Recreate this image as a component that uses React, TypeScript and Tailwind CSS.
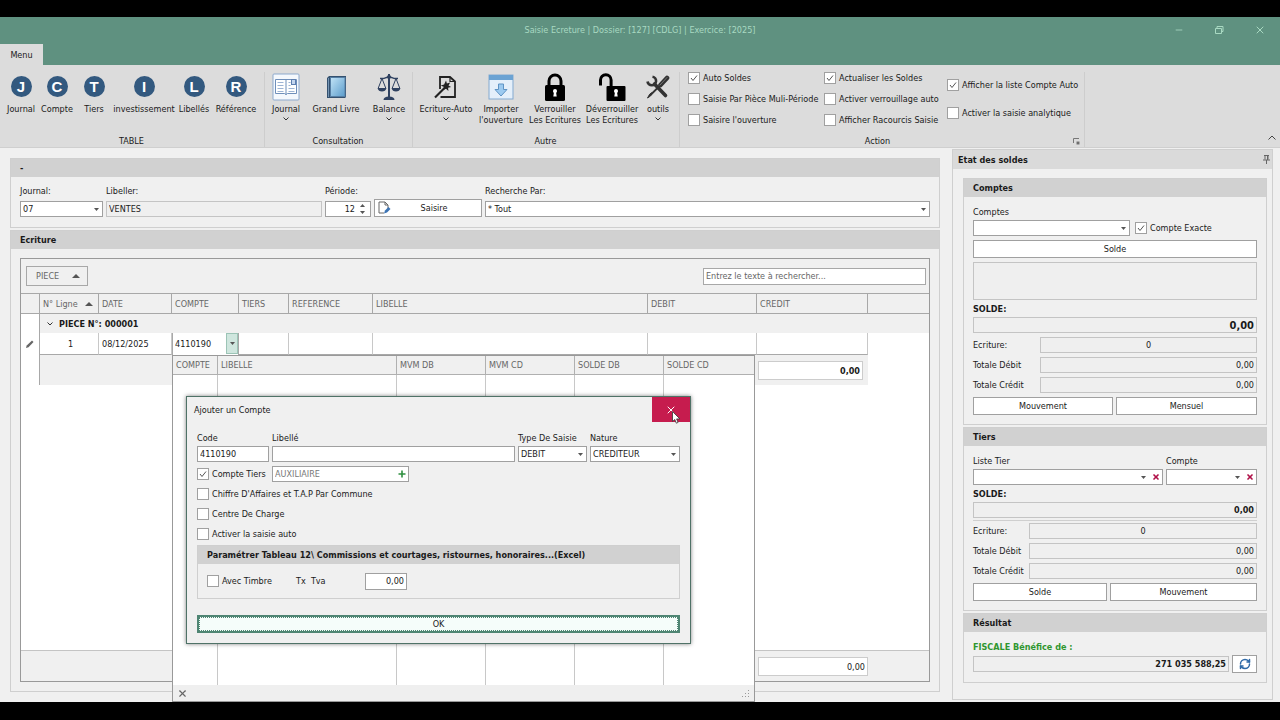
import React, { useState } from "react";
import { Minus, RefreshCw, X } from "lucide-react";


type RibbonItem = {
    label: string;
    icon: React.ReactNode;
    width: string;
    menu?: boolean;
};

/* ---------- icons ---------- */

const Letter = ({ children }: { children: string }) => (
    <span className="flex h-[21px] w-[21px] items-center justify-center rounded-full bg-[#33597f] font-['Liberation_Sans'] text-[15px] leading-none font-bold text-white">
        {children}
    </span>
);

const JournalIcon = () => (
    <svg width="28" height="28" viewBox="0 0 28 28" fill="none">
        <rect x="1" y="1" width="26" height="26" rx="1" fill="#f4f8fd" stroke="#8da9cd" />
        <path d="M3.500 6.500h21v14h-9l-1.500 1-1.500-1h-9z" fill="#fff" stroke="#6f8fba" />
        <path d="M14 7v15" stroke="#6f8fba" />
        <path d="M5.500 9.500h6M5.500 12.500h6M5.500 15.500h6M5.500 18.500h6M16.500 15.500h6M16.500 18.500h6M16.500 9.500h2M16.500 12.500h2" stroke="#9db4d4" />
        <rect x="19.500" y="6.500" width="4" height="5" fill="#c4d6ee" stroke="#5d7fb0" />
    </svg>
);

const BookIcon = () => (
    <svg width="24" height="26" viewBox="0 0 24 26">
        <defs>
            <linearGradient id="book" x1="0" y1="0" x2="1" y2="1">
                <stop offset="0%" stopColor="#c2e4f7" />
                <stop offset="100%" stopColor="#5b9ccb" />
            </linearGradient>
        </defs>
        <path d="M3 4 5 2h17v21l-1 1H3z" fill="#34516f" />
        <rect x="6.500" y="3.500" width="14.500" height="19" fill="url(#book)" stroke="#567fa4" />
        <path d="M4.500 4v19" stroke="#7494b3" />
    </svg>
);

const BalanceIcon = () => (
    <svg width="24" height="28" viewBox="0 0 24 28" fill="none" stroke="#2f4160">
        <path d="M12 1v23" strokeWidth="2" />
        <path d="M3 5.500h3c2 0 3-1.500 6-1.500s4 1.500 6 1.500h3" strokeWidth="1.400" />
        <circle cx="12" cy="4" r="2" fill="#2f4160" stroke="none" />
        <path d="m5 5.500-3.700 9.500M5 5.500 8.700 15M19 5.500 15.300 15M19 5.500l3.700 9.500" strokeWidth="1" />
        <path d="M.5 15h9c-.5 2.500-2.300 3.500-4.500 3.500S1 17.500.5 15zM14.500 15h9c-.5 2.500-2.300 3.500-4.500 3.500s-4-1-4.500-3.500z" fill="#2f4160" stroke="none" />
        <path d="M6.500 27c0-2 2-3.500 5.500-3.500s5.500 1.500 5.500 3.500z" fill="#2f4160" stroke="none" />
    </svg>
);

const WandPageIcon = () => (
    <svg width="24" height="24" viewBox="0 0 24 24" fill="none" stroke="#222" strokeWidth="1.800">
        <path d="M6 14V2h10l5 4.500V22H6.500" />
        <path d="M16 2v4.500h5" strokeWidth="1.200" />
        <path d="m1 22.500 10-10" strokeWidth="2.200" />
        <path d="m12 5.500.9 3 3.300-.9-1.700 2.900 2.600 1.500-3 .8.3 3.300-2.400-2.400-2.900 1.400.9-3.200-3.200-1.500 3.300-.9z" fill="#222" stroke="none" />
    </svg>
);

const ImportIcon = () => (
    <svg width="26" height="26" viewBox="0 0 26 26">
        <rect x="1" y="1" width="24" height="24" fill="#e4effa" stroke="#83a9d0" />
        <rect x="1" y="1" width="24" height="5" fill="#6ba3d3" />
        <path d="M10.500 10h5v5.500h3.500L13 22l-6-6.500h3.500z" fill="#9ccaf0" stroke="#5f93c4" />
    </svg>
);

const LockIcon = () => (
    <svg width="22" height="28" viewBox="0 0 22 28">
        <path d="M5 13V8a6 6 0 0 1 12 0v5" fill="none" stroke="#000" strokeWidth="3" />
        <rect x="1" y="12" width="20" height="16" rx="1.500" />
        <path d="M9 18a2 2 0 0 1 4 0c0 1-.8 1.500-.8 2.200l.5 3.300H9.300l.5-3.300c0-.7-.8-1.200-.8-2.200z" fill="#fff" />
    </svg>
);

const UnlockIcon = () => (
    <svg width="28" height="28" viewBox="0 0 28 28">
        <path d="M2.500 12.500V7a5.300 5.300 0 0 1 10.600 0v7" fill="none" stroke="#000" strokeWidth="3" />
        <rect x="8.500" y="13" width="19" height="15" rx="1" />
        <path d="M16 18a2 2 0 0 1 4 0c0 1-.8 1.500-.8 2.200l.5 3.300h-3.400l.5-3.300c0-.7-.8-1.200-.8-2.200z" fill="#fff" />
    </svg>
);

const ToolsIcon = () => (
    <svg width="24" height="24" viewBox="0 0 24 24" fill="none" stroke="#333" strokeLinecap="round">
        <path d="m8.500 9 11 11.500" strokeWidth="3.600" />
        <path d="M6.500 1.700a4.300 4.300 0 1 1-5 4.800" strokeWidth="2.600" strokeLinecap="butt" />
        <path d="M21 3 14.500 10" strokeWidth="4.600" />
        <path d="m13 11.500-8.500 8.500" strokeWidth="1.800" />
        <path d="m5.500 18-1 3-3 2 2-3.500z" fill="#333" strokeWidth="1" />
        <path d="m21 2.500-7 7.500" stroke="#888" strokeWidth=".8" />
    </svg>
);

const EditPageIcon = () => (
    <svg width="14" height="14" viewBox="0 0 14 14" fill="none">
        <path d="M2 1h6l3 3v4M2 1v11h5" stroke="#666" />
        <path d="M8 1v3h3" stroke="#666" />
        <path d="m7 12.500 1-3L11.500 6l2 2-3.500 3.500z" fill="#3c74b4" />
    </svg>
);

const Arrow = ({ className = "" }: { className?: string }) => (
    <svg className={className} width="5" height="3" viewBox="0 0 5 3">
        <path d="M0 0h5L2.500 3z" fill="#555" />
    </svg>
);

const SortUp = () => (
    <svg width="8" height="4" viewBox="0 0 8 4">
        <path d="M0 4h8L4 0z" fill="#555" />
    </svg>
);

const Chevron = ({ className = "" }: { className?: string }) => (
    <svg className={className} width="6" height="4" viewBox="0 0 6 4" fill="none">
        <path d="M.5.5 3 3 5.500.5" stroke="#333" />
    </svg>
);

const PinIcon = () => (
    <svg width="7" height="9" viewBox="0 0 7 9" fill="none" stroke="#666">
        <path d="M1 .5h5M2 .5v4M5 .5v4M4.500 1v4M0 5h7M3.500 5v4" />
    </svg>
);

const Cursor = () => (
    <svg className="absolute top-[14px] left-[20px]" width="9" height="13" viewBox="0 0 9 13">
        <path d="M.5.5v10l2.300-2 1.500 3.700 1.800-.8-1.500-3.500h3.300z" fill="#fff" stroke="#333" strokeWidth=".8" />
    </svg>
);

/* ---------- form controls ---------- */

const Check = ({ label, checked = false }: { label: string; checked?: boolean }) => {
    const [on, setOn] = useState(checked);
    return (
        <label className="flex items-center gap-[3px] whitespace-nowrap">
            <span className="relative h-3 w-3 shrink-0">
                <input
                    type="checkbox"
                    checked={on}
                    onChange={(e) => setOn(e.target.checked)}
                    className="peer block h-3 w-3 appearance-none border border-[#a0a0a0] bg-white"
                />
                <svg className="pointer-events-none absolute inset-0 hidden peer-checked:block" width="12" height="12" viewBox="0 0 12 12" fill="none">
                    <path d="m3 6 2 2.500L9 3.500" stroke="#555" />
                </svg>
            </span>
            {label}
        </label>
    );
};

type ComboProps = { id: string; value: string; className?: string; clearable?: boolean };

const Combo = ({ id, value, className = "", clearable }: ComboProps) => (
    <div className={`relative h-4 ${className}`}>
        <select id={id} className="block h-4 w-full appearance-none border border-[#a0a0a0] bg-white px-0.5">
            <option>{value}</option>
        </select>
        <Arrow className={clearable ? "pointer-events-none absolute top-[7px] right-[17px]" : "pointer-events-none absolute top-[7px] right-1"} />
        {clearable && (
            <button type="button" aria-label="Effacer" className="absolute top-[4px] right-[3px] text-[#b01048]">
                <X size={8} strokeWidth={5} />
            </button>
        )}
    </div>
);

const PushButton = ({ children, className = "" }: { children: React.ReactNode; className?: string }) => (
    <button type="button" className={`h-[18px] border border-[#a0a0a0] bg-white hover:bg-[#eaf5f1] ${className}`}>
        {children}
    </button>
);

const readOnlyField = "h-4 w-full min-w-0 border border-[#c4c4c4] bg-[#efefef] px-0.5";

const Panel = ({ title, children, className = "" }: { title: string; children: React.ReactNode; className?: string }) => (
    <section className={`flex flex-col border border-[#cfcfcf] ${className}`}>
        <h2 className="h-[18px] shrink-0 bg-[#d1d1d1] pl-[9px] leading-[18px] font-bold">{title}</h2>
        {children}
    </section>
);

/* ---------- ribbon ---------- */

const tableItems: RibbonItem[] = [
    { label: "Journal", icon: <Letter>J</Letter>, width: "w-9" },
    { label: "Compte", icon: <Letter>C</Letter>, width: "w-9" },
    { label: "Tiers", icon: <Letter>T</Letter>, width: "w-[38px]" },
    { label: "investissement", icon: <Letter>I</Letter>, width: "w-[62px]" },
    { label: "Libellés", icon: <Letter>L</Letter>, width: "w-[38px]" },
    { label: "Référence", icon: <Letter>R</Letter>, width: "w-[46px]" },
];

const consultationItems: RibbonItem[] = [
    { label: "Journal", icon: <JournalIcon />, width: "w-9", menu: true },
    { label: "Grand Livre", icon: <BookIcon />, width: "w-[64px]" },
    { label: "Balance", icon: <BalanceIcon />, width: "w-[42px]", menu: true },
];

const autreItems: RibbonItem[] = [
    { label: "Ecriture-Auto", icon: <WandPageIcon />, width: "w-[60px]", menu: true },
    { label: "Importer\nl'ouverture", icon: <ImportIcon />, width: "w-[50px]" },
    { label: "Verrouiller\nLes Ecritures", icon: <LockIcon />, width: "w-[58px]" },
    { label: "Déverrouiller\nLes Ecritures", icon: <UnlockIcon />, width: "w-[56px]" },
    { label: "outils", icon: <ToolsIcon />, width: "w-9", menu: true },
];

const RibbonGroup = ({ title, items, className }: { title: string; items: RibbonItem[]; className: string }) => (
    <div className={`flex flex-col justify-between border-r border-[#cdcdcd] pl-[3px] ${className}`}>
        <div className="flex">
            {items.map((item) => (
                <button key={item.label} type="button" className={`flex flex-col items-center ${item.width}`}>
                    <span className="flex h-[29px] items-center justify-center">{item.icon}</span>
                    <span className="pt-[3px] leading-[11px] whitespace-pre">{item.label}</span>
                    {item.menu && <Chevron className="mt-[2px]" />}
                </button>
            ))}
        </div>
        <div className="pr-1 text-center leading-3">{title}</div>
    </div>
);

const Ribbon = () => (
    <div className="flex h-[83px] border-b border-[#cfcfcf] bg-[#dcdcdc] pt-[7px]">
        <RibbonGroup title="TABLE" items={tableItems} className="w-[265px]" />
        <RibbonGroup title="Consultation" items={consultationItems} className="w-[148px]" />
        <RibbonGroup title="Autre" items={autreItems} className="w-[267px]" />
        <div className="flex w-[405px] flex-col justify-between border-r border-[#cdcdcd] pr-1 pl-2">
            <div className="flex">
                <div className="flex w-[136px] flex-col gap-[9px]">
                    <Check label="Auto Soldes" checked />
                    <Check label="Saisie Par Pièce Muli-Période" />
                    <Check label="Saisire l'ouverture" />
                </div>
                <div className="flex w-[123px] flex-col gap-[9px]">
                    <Check label="Actualiser les Soldes" checked />
                    <Check label="Activer verrouillage auto" />
                    <Check label="Afficher Racourcis Saisie" />
                </div>
                <div className="flex flex-col gap-4 pt-[7px]">
                    <Check label="Afficher la liste Compte Auto" checked />
                    <Check label="Activer la saisie analytique" />
                </div>
            </div>
            <div className="flex items-center leading-3">
                <span className="flex-1 pr-[6px] text-center">Action</span>
                <button type="button" aria-label="Options">
                    <svg width="7" height="7" viewBox="0 0 7 7" fill="none" stroke="#777">
                        <path d="M.5 5V.5H6" />
                        <rect x="4" y="4" width="2" height="2" fill="#555" />
                    </svg>
                </button>
            </div>
        </div>
        <div className="flex flex-1 items-end justify-end pr-1 pb-[7px]">
            <button type="button" aria-label="Réduire le ruban">
                <svg width="8" height="5" viewBox="0 0 8 5" fill="none">
                    <path d="M.5 4.500 4 1l3.500 3.500" stroke="#444" />
                </svg>
            </button>
        </div>
    </div>
);

/* ---------- left side ---------- */

const JournalForm = () => (
    <Panel title="-">
        <div className="grid grid-cols-[83px_216px_46px_108px_1fr] items-end gap-x-[3px] px-[9px] pt-2 pb-[10px]">
            <label htmlFor="journal" className="h-[14px]">Journal:</label>
            <label htmlFor="libeller" className="h-[14px]">Libeller:</label>
            <label htmlFor="periode" className="h-[14px]">Période:</label>
            <span />
            <label htmlFor="recherche" className="h-[14px]">Recherche Par:</label>

            <Combo id="journal" value="07" />
            <input id="libeller" readOnly defaultValue="VENTES" className={readOnlyField} />
            <div className="flex h-4 border border-[#a0a0a0] bg-white">
                <input id="periode" defaultValue="12" className="w-full min-w-0 bg-transparent text-right" />
                <span className="flex w-[15px] shrink-0 flex-col items-center justify-center gap-1">
                    <button type="button" aria-label="Plus"><Arrow className="block rotate-180" /></button>
                    <button type="button" aria-label="Moins"><Arrow className="block" /></button>
                </span>
            </div>
            <PushButton className="flex items-center pl-[2px]">
                <EditPageIcon />
                <span className="flex-1 pr-1 text-center">Saisire</span>
            </PushButton>
            <Combo id="recherche" value="* Tout" />
        </div>
    </Panel>
);

const lookupColumns = ["COMPTE", "LIBELLE", "MVM DB", "MVM CD", "SOLDE DB", "SOLDE CD"];

// account list that drops below the COMPTE cell
const AccountLookup = () => (
    <div className="absolute top-full -left-px z-10 flex h-[347px] w-[583px] flex-col border border-[#999] bg-white text-[#666]">
        <table className="h-full w-full table-fixed border-separate border-spacing-0">
            <colgroup>
                <col className="w-[45px]" />
                <col className="w-[179px]" />
                <col className="w-[89px]" />
                <col className="w-[89px]" />
                <col className="w-[89px]" />
                <col />
            </colgroup>
            <thead>
                <tr>
                    {lookupColumns.map((c) => (
                        <th key={c} className="h-[19px] border-r border-b border-[#b0b0b0] bg-[#f0f0f0] pl-[3px] text-left font-normal whitespace-nowrap last:border-r-0">{c}</th>
                    ))}
                </tr>
            </thead>
            <tbody>
                <tr>
                    {lookupColumns.map((c) => (
                        <td key={c} className="border-r border-[#c8c8c8] last:border-r-0" />
                    ))}
                </tr>
            </tbody>
        </table>
        <div className="flex h-4 shrink-0 items-center justify-between bg-[#efefef] px-1">
            <button type="button" aria-label="Fermer la liste"><X size={11} strokeWidth={2.5} /></button>
            <svg width="9" height="9" viewBox="0 0 9 9" fill="#999">
                <path d="M7 1h1v1H7zM4 4h1v1H4zM7 4h1v1H7zM1 7h1v1H1zM4 7h1v1H4zM7 7h1v1H7z" />
            </svg>
        </div>
    </div>
);

const headCell = "h-5 border-r border-b border-[#a8a8a8] pl-[3px] text-left font-normal whitespace-nowrap";
const bodyCell = "h-[22px] border-r border-b border-r-[#c8c8c8] border-b-[#a8a8a8] bg-white pl-[3px]";

const EntriesTable = () => (
    <table className="w-full table-fixed border-separate border-spacing-0">
        <colgroup>
            <col className="w-[19px]" />
            <col className="w-[59px]" />
            <col className="w-[73px]" />
            <col className="w-[67px]" />
            <col className="w-[50px]" />
            <col className="w-[84px]" />
            <col className="w-[275px]" />
            <col className="w-[109px]" />
            <col className="w-[111px]" />
            <col />
        </colgroup>
        <thead className="text-[#666]">
            <tr>
                <th className={headCell} />
                <th className={headCell}>
                    <span className="flex items-center justify-between pr-[5px]">N° Ligne <SortUp /></span>
                </th>
                <th className={headCell}>DATE</th>
                <th className={headCell}>COMPTE</th>
                <th className={headCell}>TIERS</th>
                <th className={headCell}>REFERENCE</th>
                <th className={headCell}>LIBELLE</th>
                <th className={headCell}>DEBIT</th>
                <th className={headCell}>CREDIT</th>
                <th className="border-b border-[#a8a8a8]" />
            </tr>
        </thead>
        <tbody>
            <tr>
                <td className="h-[19px] border-r border-[#a8a8a8] bg-white" />
                <td colSpan={9} className="pl-[7px] font-bold">
                    <span className="flex items-center gap-[6px]"><Chevron /> PIECE N°: 000001</span>
                </td>
            </tr>
            <tr>
                <td className="border-r border-[#a8a8a8] bg-white">
                    <svg className="mx-auto" width="8" height="8" viewBox="0 0 8 8">
                        <path d="m0 8 .7-2.500L6 .5 7.500 2 2.500 7.300z" fill="#666" />
                    </svg>
                </td>
                <td className={`${bodyCell} text-center`}>1</td>
                <td className={bodyCell}>08/12/2025</td>
                <td className="relative h-[22px] border-r border-l border-[#a8a8a8] bg-white">
                    <div className="flex h-full items-stretch">
                        <input aria-label="Compte" defaultValue="4110190" className="w-full min-w-0 pl-[2px]" />
                        <button type="button" aria-label="Liste des comptes" className="flex h-[21px] w-3 shrink-0 items-center justify-center border border-[#9cc4b6] bg-[#cfe6de]">
                            <Arrow />
                        </button>
                    </div>
                    <AccountLookup />
                </td>
                <td className={bodyCell} />
                <td className={bodyCell} />
                <td className={bodyCell} />
                <td className={bodyCell} />
                <td className={bodyCell} />
                <td className="bg-white" />
            </tr>
            <tr>
                <td className="h-[30px] border-r border-[#a8a8a8] bg-white" />
                <td colSpan={7} />
                <td className="pr-[5px] pl-px">
                    <div className="h-[19px] border border-[#ccc] bg-white pr-[2px] text-right leading-[18px] font-bold">0,00</div>
                </td>
                <td className="bg-white" />
            </tr>
        </tbody>
    </table>
);

const Entries = () => (
    <Panel title="Ecriture" className="mt-[2px] flex-1">
        <div className="mx-[9px] mt-[9px] mb-[9px] flex flex-1 flex-col border border-[#999]">
            <div className="flex h-[35px] items-center justify-between border-b border-[#a8a8a8] pr-[3px] pl-[5px]">
                <button type="button" className="flex h-5 w-[62px] items-center justify-between border border-[#a8a8a8] pr-[7px] pl-[9px] text-[#666]">
                    PIECE <SortUp />
                </button>
                <input aria-label="Rechercher" placeholder="Entrez le texte à rechercher..." className="h-[17px] w-[223px] border border-[#a8a8a8] bg-white px-0.5 placeholder:text-[#666]" />
            </div>
            <EntriesTable />
            <div className="flex-1 bg-white" />
            <div className="flex h-[31px] items-center border-t border-[#c4c4c4]">
                <div className="ml-[737px] h-[19px] w-[110px] border border-[#ccc] bg-white pr-[2px] text-right leading-[18px]">0,00</div>
            </div>
        </div>
    </Panel>
);

/* ---------- right side ---------- */

type BalanceRowsProps = { prefix: string; cols: string };

const BalanceRows = ({ prefix, cols }: BalanceRowsProps) => (
    <div className={`grid items-center gap-y-1 ${cols}`}>
        <label htmlFor={`${prefix}-ecriture`}>Ecriture:</label>
        <input id={`${prefix}-ecriture`} readOnly defaultValue="0" className={`${readOnlyField} text-center`} />
        <label htmlFor={`${prefix}-debit`}>Totale Débit</label>
        <input id={`${prefix}-debit`} readOnly defaultValue="0,00" className={`${readOnlyField} text-right`} />
        <label htmlFor={`${prefix}-credit`}>Totale Crédit</label>
        <input id={`${prefix}-credit`} readOnly defaultValue="0,00" className={`${readOnlyField} text-right`} />
    </div>
);

const BalancePanel = () => (
    <aside className="mt-px mr-[7px] mb-[2px] flex w-[321px] shrink-0 flex-col border border-[#cfcfcf]">
        <div className="flex h-[19px] items-center justify-between bg-[#dadada] pr-[2px] pl-[5px] font-bold">
            Etat des soldes
            <button type="button" aria-label="Épingler"><PinIcon /></button>
        </div>
        <div className="flex flex-col gap-[2px] pt-[9px] pr-[5px] pl-[10px]">
            <Panel title="Comptes">
                <div className="flex flex-col px-[9px] pt-[9px] pb-[9px]">
                    <label htmlFor="comptes" className="h-[14px]">Comptes</label>
                    <div className="flex items-center gap-[5px]">
                        <Combo id="comptes" value="" className="w-[157px]" />
                        <Check label="Compte Exacte" checked />
                    </div>
                    <PushButton className="mt-1">Solde</PushButton>
                    <textarea readOnly aria-label="Détail" className="mt-1 h-[38px] resize-none border border-[#c4c4c4] bg-[#efefef]" />
                    <label htmlFor="c-solde" className="mt-[3px] h-[14px] font-bold">SOLDE:</label>
                    <input id="c-solde" readOnly defaultValue="0,00" className={`${readOnlyField} mb-1 text-right text-[11px] font-bold`} />
                    <BalanceRows prefix="c" cols="grid-cols-[67px_1fr]" />
                    <div className="mt-1 flex gap-[3px]">
                        <PushButton className="w-[140px]">Mouvement</PushButton>
                        <PushButton className="flex-1">Mensuel</PushButton>
                    </div>
                </div>
            </Panel>
            <Panel title="Tiers">
                <div className="flex flex-col px-[9px] pt-[9px] pb-[9px]">
                    <div className="grid grid-cols-[190px_1fr] gap-x-[3px]">
                        <label htmlFor="liste-tier" className="h-[14px]">Liste Tier</label>
                        <label htmlFor="tier-compte" className="h-[14px]">Compte</label>
                        <Combo id="liste-tier" value="" clearable />
                        <Combo id="tier-compte" value="" clearable />
                    </div>
                    <label htmlFor="t-solde" className="mt-[3px] h-[14px] font-bold">SOLDE:</label>
                    <input id="t-solde" readOnly defaultValue="0,00" className={`${readOnlyField} text-right font-bold`} />
                    <hr className="my-[2px] border-[#cfcfcf]" />
                    <BalanceRows prefix="t" cols="grid-cols-[56px_1fr]" />
                    <div className="mt-1 flex gap-[3px]">
                        <PushButton className="w-[134px]">Solde</PushButton>
                        <PushButton className="flex-1">Mouvement</PushButton>
                    </div>
                </div>
            </Panel>
            <Panel title="Résultat">
                <div className="px-[9px] pt-[9px] pb-[9px]">
                    <label htmlFor="resultat" className="block h-[14px] font-bold text-[#2f962f]">FISCALE Bénéfice de :</label>
                    <div className="flex items-center gap-[3px]">
                        <input id="resultat" readOnly defaultValue="271 035 588,25" className={`${readOnlyField} text-right font-bold`} />
                        <PushButton className="flex w-[25px] shrink-0 items-center justify-center text-[#2f6aa8]">
                            <RefreshCw size={12} strokeWidth={3} aria-label="Actualiser" />
                        </PushButton>
                    </div>
                </div>
            </Panel>
        </div>
    </aside>
);

/* ---------- new account window ---------- */

const AccountDialog = ({ onClose }: { onClose: () => void }) => (
    <div role="dialog" aria-label="Ajouter un Compte" className="absolute top-[379px] left-[186px] z-20 w-[505px] border border-[#4f7267] bg-[#f0f0f0] shadow-[0_0_4px_rgba(0,0,0,0.5)]">
        <div className="flex h-[26px] items-center justify-between pl-[7px]">
            Ajouter un Compte
            <button type="button" aria-label="Fermer" onClick={onClose} className="relative flex h-[25px] w-[38px] items-center justify-center self-start bg-[#c61c4e] text-white">
                <X size={12} strokeWidth={2} />
                <Cursor />
            </button>
        </div>
        <div className="flex flex-col px-[10px] pt-[9px] pb-[10px]">
            <div className="grid grid-cols-[72px_1fr_69px_90px] gap-x-[3px]">
                <label htmlFor="code" className="h-[14px]">Code</label>
                <label htmlFor="libelle" className="h-[14px]">Libellé</label>
                <label htmlFor="type-saisie" className="h-[14px] whitespace-nowrap">Type De Saisie</label>
                <label htmlFor="nature" className="h-[14px]">Nature</label>
                <input id="code" defaultValue="4110190" className="h-4 min-w-0 border border-[#a0a0a0] bg-white px-0.5" />
                <input id="libelle" className="h-4 min-w-0 border border-[#a0a0a0] bg-white px-0.5" />
                <Combo id="type-saisie" value="DEBIT" />
                <Combo id="nature" value="CREDITEUR" />
            </div>
            <div className="mt-1 flex items-center">
                <div className="w-[75px]"><Check label="Compte Tiers" checked /></div>
                <div className="flex h-4 w-[137px] items-center border border-[#a0a0a0] bg-white pr-[2px] pl-0.5">
                    <input aria-label="Compte tiers" placeholder="AUXILIAIRE" className="w-full min-w-0 placeholder:text-[#777]" />
                    <button type="button" aria-label="Ajouter">
                        <svg width="8" height="8" viewBox="0 0 8 8">
                            <path d="M4 .5v7M.5 4h7" stroke="#2f8f3f" strokeWidth="1.600" />
                        </svg>
                    </button>
                </div>
            </div>
            <div className="flex flex-col gap-2 pt-[6px]">
                <Check label="Chiffre D'Affaires et T.A.P Par Commune" />
                <Check label="Centre De Charge" />
                <Check label="Activer la saisie auto" />
            </div>
            <Panel title="Paramétrer Tableau 12\ Commissions et courtages, ristournes, honoraires...(Excel)" className="mt-[5px]">
                <div className="flex h-[34px] items-center pl-[9px]">
                    <div className="w-[89px]"><Check label="Avec Timbre" /></div>
                    <label htmlFor="tva" className="w-[69px] whitespace-pre">Tx  Tva</label>
                    <input id="tva" defaultValue="0,00" className="h-[17px] w-[42px] border border-[#a0a0a0] bg-white px-0.5 text-right" />
                </div>
            </Panel>
            <button type="button" onClick={onClose} className="mt-4 h-[18px] border-2 border-[#4f8573] bg-[#f5fdfa] leading-3 outline-1 -outline-offset-3 outline-dotted outline-[#4f8573]">
                OK
            </button>
        </div>
    </div>
);

const App = () => {
    const [showDialog, setShowDialog] = useState(true);

    return (
        <div className="relative flex min-h-screen flex-col border-t-[17px] border-b-[18px] border-black bg-[#f0f0f0] font-['DejaVu_Sans_Condensed','DejaVu_Sans',sans-serif] text-[9px] leading-3 text-[#1a1a1a]">
            <header className="flex h-12 flex-col justify-between bg-[#5f9180]">
                <div className="grid grid-cols-[1fr_auto_1fr] items-center pt-[7px] text-[#a9d9c2]">
                    <span />
                    <h1>Saisie Ecreture | Dossier: [127] [CDLG] | Exercice: [2025]</h1>
                    <div className="flex justify-end gap-[30px] pr-[14px]">
                        <button type="button" aria-label="Réduire"><Minus size={10} strokeWidth={2} /></button>
                        <button type="button" aria-label="Restaurer">
                            <svg width="10" height="10" viewBox="0 0 10 10" fill="none" stroke="currentColor">
                                <path d="M1.500 3.500h6v5h-6zM3 3.500v-2h6v5H7.500" />
                            </svg>
                        </button>
                        <button type="button" aria-label="Quitter"><X size={12} strokeWidth={2} /></button>
                    </div>
                </div>
                <nav className="flex">
                    <button type="button" className="h-[21px] w-[43px] bg-[#dcdcdc]">Menu</button>
                </nav>
            </header>
            <Ribbon />
            <main className="flex flex-1">
                <div className="mt-[10px] mr-[12px] mb-[10px] ml-[10px] flex min-w-0 flex-1 flex-col">
                    <JournalForm />
                    <Entries />
                </div>
                <BalancePanel />
            </main>
            {showDialog && <AccountDialog onClose={() => setShowDialog(false)} />}
        </div>
    );
};

export default App;
